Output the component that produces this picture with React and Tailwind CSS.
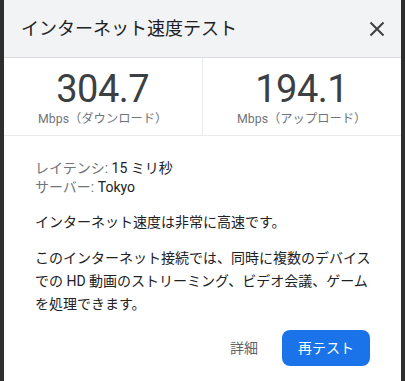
import React from "react";

export default function App() {
  const font = { fontFamily: "Roboto, 'Noto Sans CJK JP', sans-serif" };
  return (
    <div className="w-[405px] h-[381px] bg-[#2e2e2e] flex pl-[4px] overflow-hidden" style={font}>
      <div className="w-[397px] h-[381px] bg-white flex flex-col">
        <div className="h-[58px] shrink-0 bg-[#f1f3f4] border-b border-[#dadce0] flex items-center justify-between pl-[17px] pr-[12px]">
          <span className="text-[18px] text-[#202124]">インターネット速度テスト</span>
          <svg width="24" height="24" viewBox="0 0 24 24" className="text-[#3c4043]">
            <path d="M5.5 5.5 L18.5 18.5 M18.5 5.5 L5.5 18.5" stroke="currentColor" strokeWidth="2" fill="none" />
          </svg>
        </div>
        <div className="h-[78px] shrink-0 grid grid-cols-2 border-b border-[#e8eaed]">
          <div className="flex flex-col items-center pt-[10px] border-r border-[#e8eaed]">
            <span className="text-[38px] leading-[43px] tracking-[-0.5px] text-[#3c4043]">304.7</span>
            <span className="text-[12.3px] leading-[16px] text-[#70757a]">Mbps（ダウンロード）</span>
          </div>
          <div className="flex flex-col items-center pt-[10px]">
            <span className="text-[38px] leading-[43px] tracking-[-0.5px] text-[#3c4043]">194.1</span>
            <span className="text-[12.3px] leading-[16px] text-[#70757a]">Mbps（アップロード）</span>
          </div>
        </div>
        <div className="pl-[31px] pr-[24px] pt-[23px] text-[14px] text-[#202124]">
          <div className="leading-[19px]">
            <span className="text-[#70757a]">レイテンシ: </span>15 ミリ秒
          </div>
          <div className="leading-[19px]">
            <span className="text-[#70757a]">サーバー: </span>Tokyo
          </div>
          <p className="mt-[15px] leading-[20px]">インターネット速度は非常に高速です。</p>
          <p className="mt-[15px] leading-[23px]">
            このインターネット接続では、同時に複数のデバイスでの HD 動画のストリーミング、ビデオ会議、ゲームを処理できます。
          </p>
        </div>
        <div className="flex items-center justify-end gap-[24px] pr-[31px] mt-[14px]">
          <span className="text-[14px] text-[#5f6368]">詳細</span>
          <button className="w-[88px] h-[36px] rounded-[8px] bg-[#1a73e8] text-white text-[14px]">再テスト</button>
        </div>
      </div>
    </div>
  );
}
